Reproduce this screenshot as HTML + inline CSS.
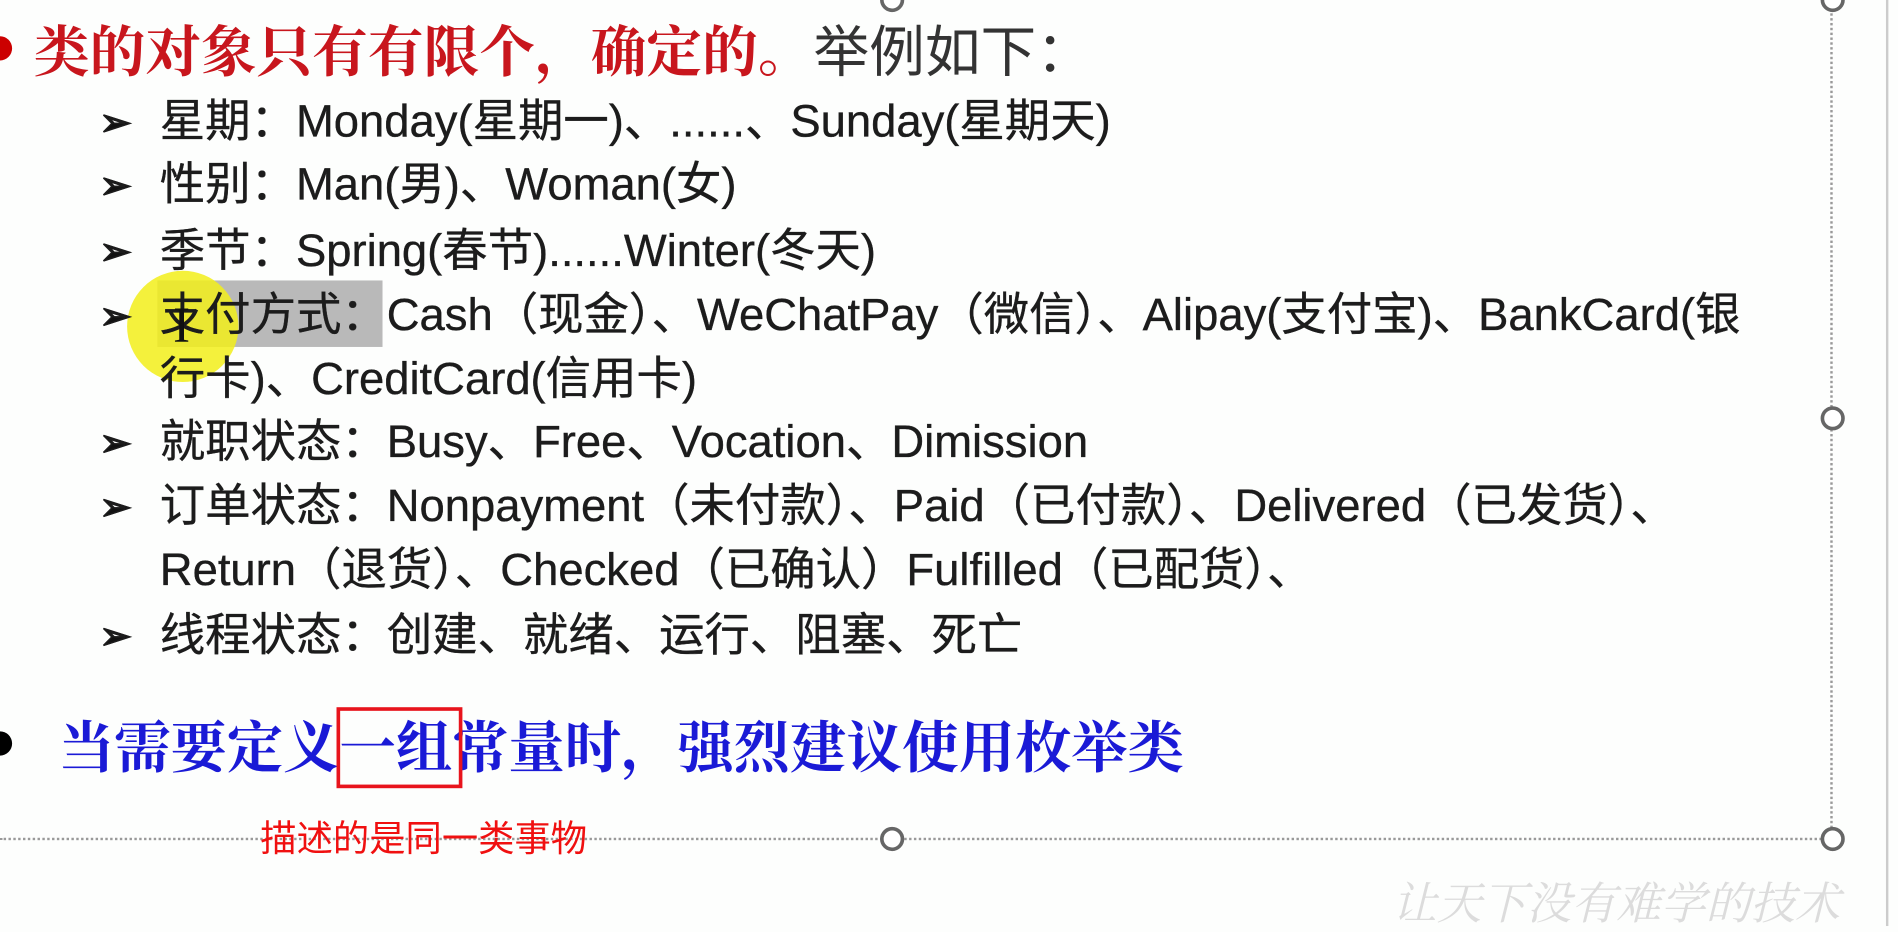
<!DOCTYPE html>
<html><head><meta charset="utf-8"><style>
html,body{margin:0;padding:0;background:#fdfefd;overflow:hidden}
#w{position:absolute;left:0;top:0;width:1568px;height:766px;transform:scale(1.2105,1.2089);transform-origin:0 0;font-family:"Liberation Sans","Noto Sans CJK SC",sans-serif}
.a{position:absolute;white-space:nowrap}
.it{font-size:37.5px;color:#1c1c1c;line-height:44px;height:44px;left:132px;-webkit-text-stroke:0.3px #1c1c1c}
.ar{position:absolute;left:-50px;top:1px;font-size:32px;color:#111;font-weight:bold}
.c{position:absolute;border-radius:50%;border:3px solid #666;background:#fff;width:14px;height:14px}
</style></head><body><div id="w">
<div class="a" style="left:130px;top:232px;width:186px;height:55px;background:#b9b9b9"></div>
<div class="a" style="left:105px;top:224px;width:92px;height:92px;border-radius:50%;background:#f2ef1a;opacity:.85"></div>
<div class="a" style="left:0;top:693px;width:1512px;border-top:2px dotted #999"></div>
<div class="a" style="left:1512px;top:0;height:693px;border-left:2px dotted #999"></div>
<div class="a" style="left:1558px;top:0;height:766px;width:2px;background:#ccc"></div>
<div class="c" style="left:727px;top:-10px"></div>
<div class="c" style="left:1504px;top:-10px"></div>
<div class="c" style="left:1504px;top:336px"></div>
<div class="c" style="left:727px;top:684px"></div>
<div class="c" style="left:1504px;top:684px"></div>
<div class="a" style="left:-10px;top:30px;width:20px;height:20px;border-radius:50%;background:#c00"></div>
<div class="a" style="left:28px;top:12px;font-size:46px;line-height:56px;font-weight:bold;color:#c8161d;font-family:'Noto Serif CJK SC',serif">类的对象只有有限个，确定的。<span style="color:#333;font-weight:normal;font-family:'Noto Sans CJK SC',sans-serif">举例如下：</span></div>
<div class="a it" style="top:78px"><span class="ar">➢</span>星期：Monday(星期一)、......、Sunday(星期天)</div>
<div class="a it" style="top:130px"><span class="ar">➢</span>性别：Man(男)、Woman(女)</div>
<div class="a it" style="top:185px"><span class="ar">➢</span>季节：Spring(春节)......Winter(冬天)</div>
<div class="a it" style="top:238px"><span class="ar">➢</span>支付方式：Cash（现金）、WeChatPay（微信）、Alipay(支付宝)、BankCard(银</div>
<div class="a it" style="top:291px">行卡)、CreditCard(信用卡)</div>
<div class="a it" style="top:343px"><span class="ar">➢</span>就职状态：Busy、Free、Vocation、Dimission</div>
<div class="a it" style="top:396px"><span class="ar">➢</span>订单状态：Nonpayment（未付款）、Paid（已付款）、Delivered（已发货）、</div>
<div class="a it" style="top:449px">Return（退货）、Checked（已确认）Fulfilled（已配货）、</div>
<div class="a it" style="top:503px"><span class="ar">➢</span>线程状态：创建、就绪、运行、阻塞、死亡</div>
<div class="a" style="left:143px;top:248px;font-size:42px;line-height:44px;color:#111;font-family:'Liberation Serif',serif">I</div>
<div class="a" style="left:-10px;top:605px;width:20px;height:20px;border-radius:50%;background:#000"></div>
<div class="a" style="left:48px;top:588px;font-size:46.5px;line-height:56px;font-weight:bold;color:#1a1ad6;font-family:'Noto Serif CJK SC',serif">当需要定义一组常量时，强烈建议使用枚举类</div>
<div class="a" style="left:278px;top:585px;width:98px;height:61px;border:3px solid #e8141c"></div>
<div class="a" style="left:215px;top:673px;font-size:30px;line-height:36px;color:#f01010;font-family:'Noto Sans CJK SC',sans-serif">描述的是同一类事物</div>
<div class="a" style="left:1150px;top:722px;font-size:37px;line-height:44px;color:#dcdcdc;font-style:italic;font-family:'Noto Serif CJK SC',serif">让天下没有难学的技术</div>
</div></body></html>
